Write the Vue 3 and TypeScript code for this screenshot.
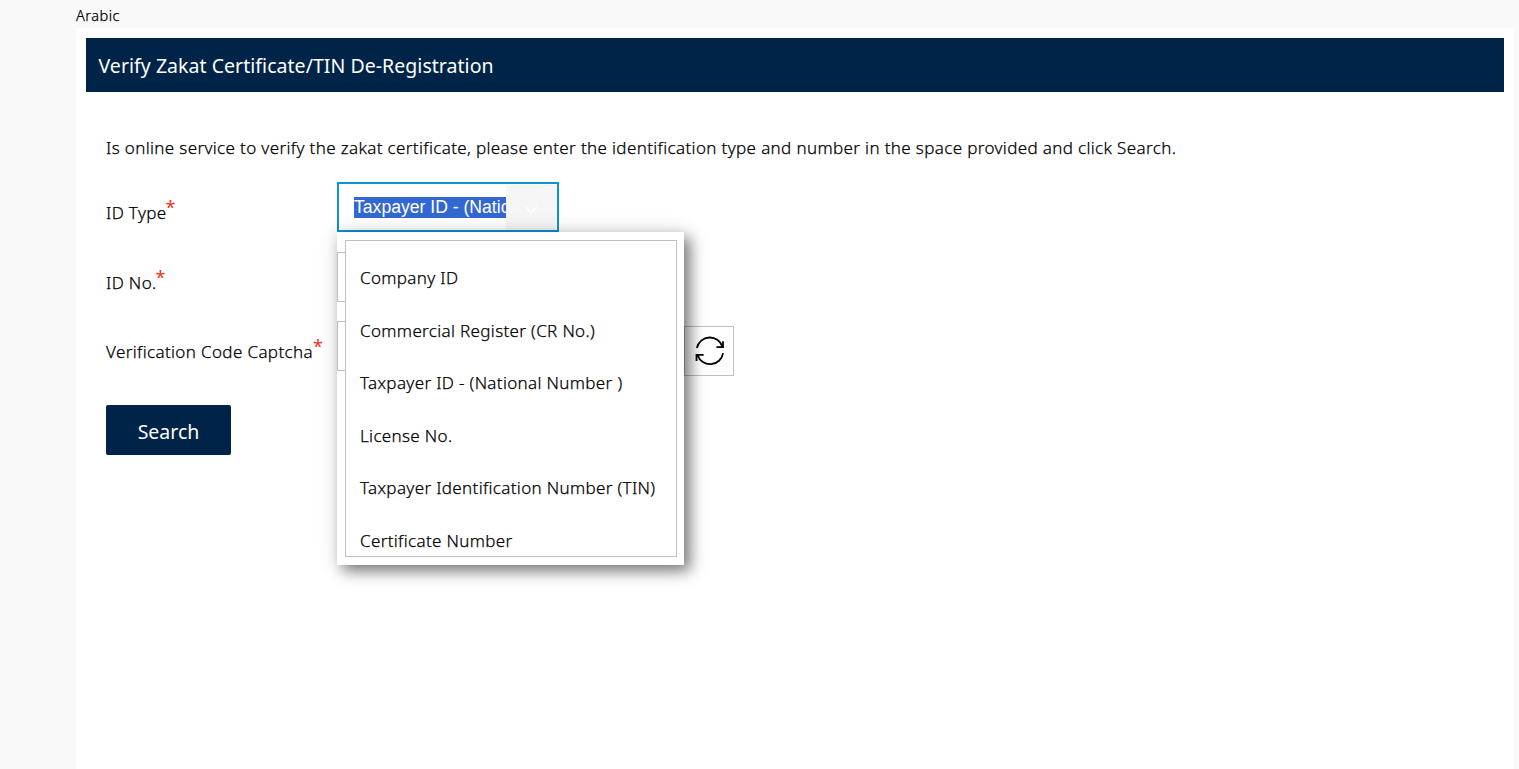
<script setup lang="ts">
const options: string[] = [
  'Company ID',
  'Commercial Register (CR No.)',
  'Taxpayer ID - (National Number )',
  'License No.',
  'Taxpayer Identification Number (TIN)',
  'Certificate Number',
]
</script>

<template>
  <div class="page">
    <a class="language">Arabic</a>
    <main class="panel">
      <header class="title"><span>Verify Zakat Certificate/TIN De-Registration</span></header>
      <form class="form" @submit.prevent>
        <p class="intro"><span>Is online service to verify the zakat certificate, please enter the identification type and number in the space provided and click Search.</span></p>
        <div class="row">
          <label class="label"><span>ID Type</span><b class="star">*</b></label>
          <div class="combo">
            <div class="value"><span class="selected">Taxpayer ID - (Natio</span></div>
            <div class="arrow">
              <svg width="14" height="9" viewBox="0 0 14 9"><path d="M1 1.5 7 7.5 13 1.5" fill="none" stroke="#fff" stroke-width="1.3" /></svg>
            </div>
            <div class="popup">
              <ul class="list">
                <li v-for="option in options" :key="option"><span>{{ option }}</span></li>
              </ul>
            </div>
          </div>
        </div>
        <div class="row">
          <label class="label"><span>ID No.</span><b class="star">*</b></label>
          <div class="field"></div>
        </div>
        <div class="row captcha">
          <label class="label"><span>Verification Code Captcha</span><b class="star">*</b></label>
          <div class="field"></div>
          <button class="refresh" type="button">
            <svg width="30" height="30" viewBox="0 0 30 30" fill="none" stroke="#000" stroke-width="1.8">
              <path d="M1.9 12A13.2 13.2 0 0 1 27.4 10.7M28 5.2V11.2H21.4" />
              <path d="M28.1 17.2A13.2 13.2 0 0 1 2.6 19.3M1.5 25V18.8H8.6" />
            </svg>
          </button>
        </div>
        <button class="search" type="submit"><span>Search</span></button>
      </form>
    </main>
  </div>
</template>

<style>
body { background: #f9f9f9; overflow: hidden; }
</style>

<style scoped>
* { box-sizing: border-box; }
.page {
  height: 769px;
  padding: 0 5px 0 76px;
  overflow: hidden;
  background: #f9f9f9;
  color: #000;
  font-family: "Noto Sans", "Open Sans", sans-serif;
  font-size: 17px;
  font-weight: 300;
  letter-spacing: 0.36px;
  -webkit-text-stroke: 0.25px;
  display: flex;
  flex-direction: column;
}
.language { height: 28px; flex: none; font-size: 14.5px; line-height: 30px; letter-spacing: 0.5px; }
.panel { flex: 1; background: #fff; padding: 10px; }
.title {
  height: 54px;
  padding-left: 12.5px;
  background: #002447;
  color: #fff;
  font-size: 19.5px;
  font-weight: 400;
  letter-spacing: 0.04px;
  -webkit-text-stroke: 0;
  line-height: 56px;
  white-space: nowrap;
}
.form { padding: 41px 20px; }
.intro { margin: 0; height: 49px; line-height: 29px; white-space: nowrap; }
.row { display: flex; height: 50px; margin-bottom: 20px; }
.row + .captcha { margin-top: -1px; margin-bottom: 34px; }
.label { flex: none; width: 231px; line-height: 61px; display: flex; white-space: nowrap; }
.star { margin-left: -1px; color: #f0321e; font-weight: 400; font-size: 18px; line-height: 50px; letter-spacing: 0; -webkit-text-stroke: 0; }
.captcha .star { margin-left: 0; }
.combo {
  position: relative;
  width: 222px;
  height: 50px;
  display: flex;
  border: 2px solid #0a94d1;
}
.value {
  width: 167px;
  padding-left: 15px;
  overflow: hidden;
  color: #fff;
  font: 17.6px/21px "Liberation Sans", Arial, sans-serif;
  letter-spacing: 0;
  -webkit-text-stroke: 0;
  white-space: nowrap;
}
.selected { display: inline-block; margin-top: 13px; background: #3367d1; }
.arrow { flex: 1; display: flex; align-items: center; justify-content: center; background: #f6f6f6; border: solid #fff; border-width: 1px 1px 0 0; padding-top: 3px; }
.popup {
  position: absolute;
  z-index: 2;
  top: 48px;
  left: -2px;
  width: 347px;
  height: 333px;
  padding: 8px 7px 8px 8px;
  box-shadow: 6px 6px 14px rgba(0, 0, 0, 0.5), 0 0 20px rgba(0, 0, 0, 0.1);
}
.list {
  margin: 0;
  padding: 11px 0 0 14px;
  height: 317px;
  overflow: hidden;
  list-style: none;
  background: #fff;
  border: 1px solid #bfbfbf;
}
.list li { height: 52.6px; line-height: 51px; white-space: nowrap; letter-spacing: 0.34px; }
.field { width: 222px; height: 50px; border: 1px solid #bfbfbf; }
.refresh {
  width: 50px;
  height: 50px;
  margin: 5px 0 0 125px;
  padding: 0 0 0 1px;
  display: flex;
  align-items: center;
  justify-content: center;
  background: #fff;
  border: 1px solid #bfbfbf;
}
.search {
  display: block;
  width: 125px;
  height: 50px;
  padding: 3px 0 0;
  border: 0;
  border-radius: 2px;
  background: #002447;
  color: #fff;
  font: inherit;
  font-weight: 400;
  letter-spacing: 0;
  -webkit-text-stroke: 0;
  font-size: 19.5px;
}
</style>
